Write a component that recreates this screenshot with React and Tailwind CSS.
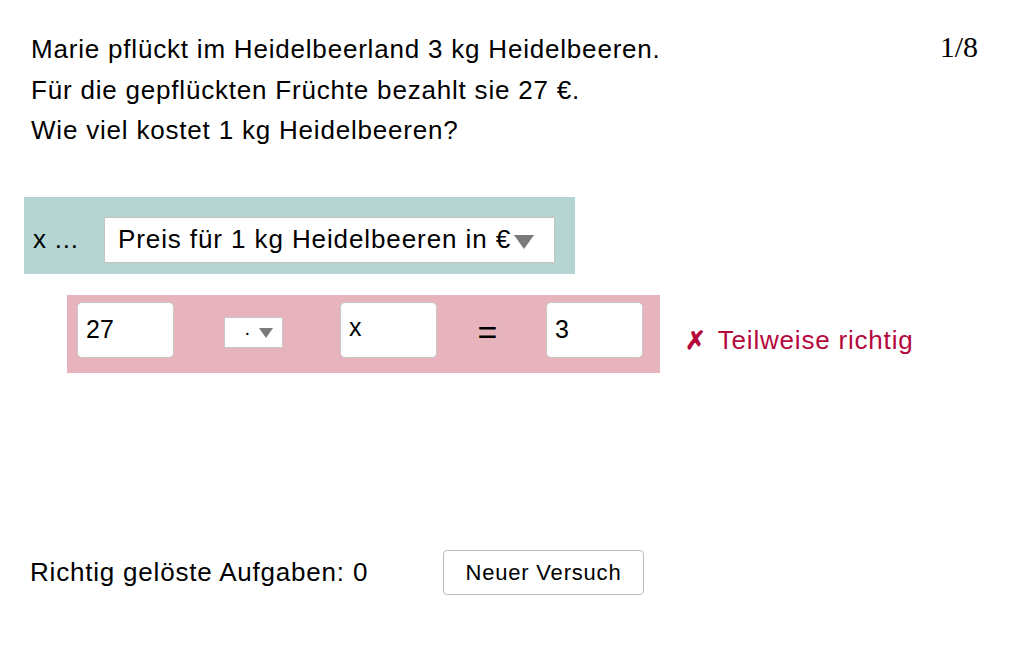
const sans = { fontFamily: '"Liberation Sans", Arial, sans-serif' };

const Triangle = ({ className }) => (
  <svg viewBox="0 0 20 14" className={className}>
    <path d="M0 0 L20 0 L10 14 Z" fill="#7a7a7a" />
  </svg>
);

const Box = ({ value, top }) => (
  <div
    className={`flex h-[56px] w-[97px] rounded-[5px] border border-[#c8c8c8] bg-white px-[8px] text-[25px] text-black ${top ? "items-start pt-[6px]" : "items-center"}`}
  >
    {value}
  </div>
);

export default function App() {
  return (
    <div className="h-[645px] w-[1032px] bg-white text-black" style={sans}>
      <div className="flex items-start justify-between pl-[31px] pr-[54px] pt-[29px]">
        <div className="text-[26px] leading-[40.5px] tracking-[0.8px]">
          <p>Marie pflückt im Heidelbeerland 3 kg Heidelbeeren.</p>
          <p>Für die gepflückten Früchte bezahlt sie 27 €.</p>
          <p>Wie viel kostet 1 kg Heidelbeeren?</p>
        </div>
        <div
          className="mt-[-2px] text-[30px] leading-[40px]"
          style={{ fontFamily: '"Liberation Serif", "Times New Roman", serif' }}
        >
          1/8
        </div>
      </div>

      <div className="ml-[24px] mt-[46px] flex h-[77px] w-[551px] items-start bg-[#b4d5d1] pl-[9px] pt-[20px]">
        <span className="mt-[7px] w-[71px] text-[26px] leading-[30px] tracking-[0.8px]">
          x ...
        </span>
        <div className="flex h-[46px] w-[451px] items-center border border-[#c4c4c4] bg-white pl-[13px]">
          <span className="text-[26px] tracking-[0.9px]">
            Preis für 1 kg Heidelbeeren in €
          </span>
          <Triangle className="ml-[3px] mt-[5px] h-[14px] w-[20px]" />
        </div>
      </div>

      <div className="ml-[67px] mt-[21px] flex items-center">
        <div className="flex h-[78px] w-[593px] items-start bg-[#e7b4bd] pl-[10px] pt-[7px]">
          <Box value="27" />
          <div className="ml-[50px] mt-[15px] flex h-[31px] w-[59px] items-center border border-[#c8c8c8] bg-white pl-[19px]">
            <span className="text-[20px] leading-none">·</span>
            <Triangle className="ml-[8px] mt-[2px] h-[10px] w-[14px]" />
          </div>
          <div className="ml-[57px]">
            <Box value="x" top />
          </div>
          <div className="flex h-[62px] w-[109px] items-center justify-center pr-[8px] text-[34px] font-light">
            =
          </div>
          <Box value="3" />
        </div>
        <div className="ml-[25px] mt-[14px] flex items-center text-[26px] tracking-[0.8px] text-[#b4083d]">
          <span className="mr-[11px] text-[25px] font-bold">✗</span>
          <span>Teilweise richtig</span>
        </div>
      </div>

      <div className="ml-[30px] mt-[177px] flex items-center">
        <span className="w-[413px] text-[26px] tracking-[0.8px]">
          Richtig gelöste Aufgaben: 0
        </span>
        <button
          type="button"
          className="h-[45px] w-[201px] rounded-[4px] border border-[#bdbdbd] bg-white text-[22px] tracking-[0.8px]"
        >
          Neuer Versuch
        </button>
      </div>
    </div>
  );
}
